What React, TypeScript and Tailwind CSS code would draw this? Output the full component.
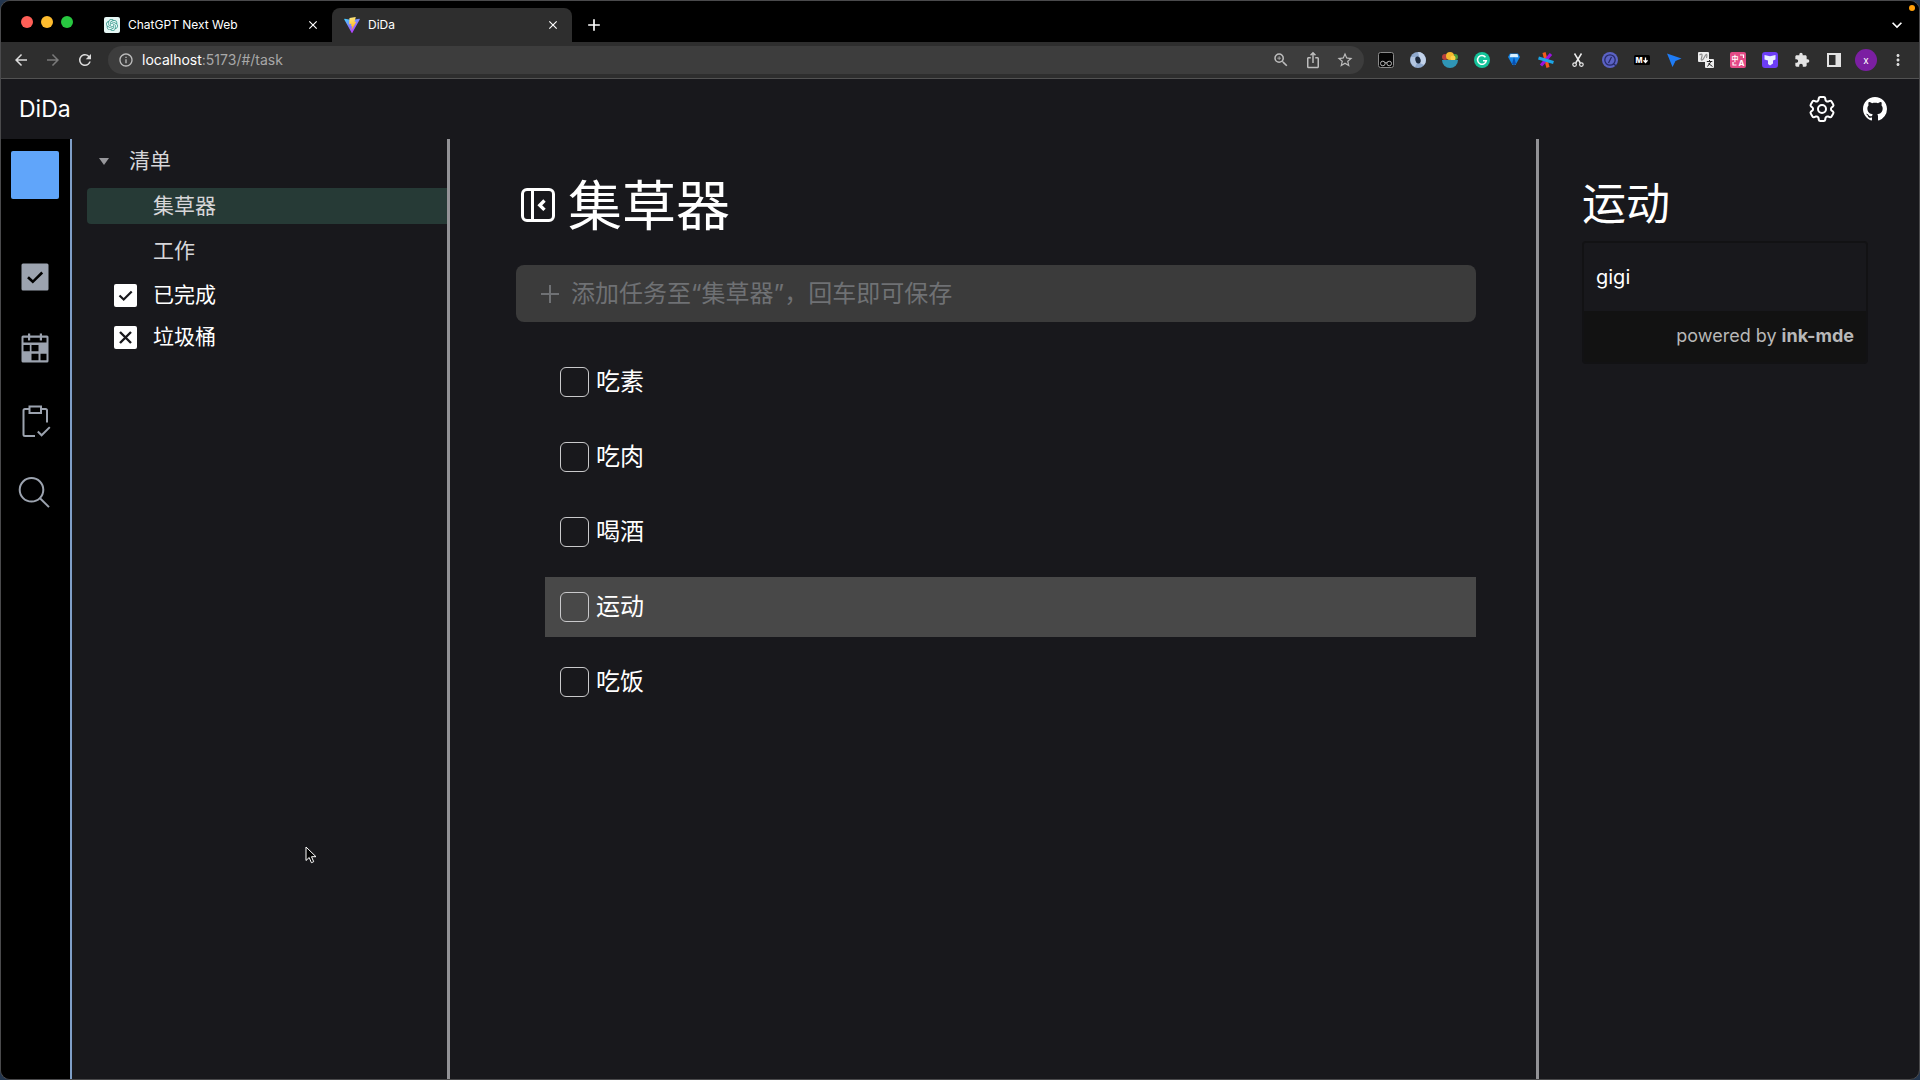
import { useState, type ReactNode } from "react";
import { SiOpenai } from "react-icons/si";
import { HiOutlineCog6Tooth } from "react-icons/hi2";
import { BsGithub } from "react-icons/bs";
import {
  MdArrowBack,
  MdArrowForward,
  MdClose,
  MdExtension,
  MdInfoOutline,
  MdMoreVert,
  MdRefresh,
  MdStarOutline,
  MdZoomIn,
  MdIosShare,
  MdExpandMore,
  MdAdd,
} from "react-icons/md";

const tasks = ["吃素", "吃肉", "喝酒", "运动", "吃饭"];

function ViteLogo() {
  return (
    <svg viewBox="0 0 32 32" className="size-4 shrink-0">
      <defs>
        <linearGradient id="vite-a" x1="0" y1="0" x2="0.6" y2="1">
          <stop offset="0" stopColor="#41d1ff" />
          <stop offset="1" stopColor="#bd34fe" />
        </linearGradient>
        <linearGradient id="vite-b" x1="0.4" y1="0" x2="0.6" y2="1">
          <stop offset="0" stopColor="#ffea83" />
          <stop offset="1" stopColor="#ffa800" />
        </linearGradient>
      </defs>
      <path fill="url(#vite-a)" d="M31.5 5 17 31a1 1 0 0 1-2 0L.5 5c-.4-.8.3-1.6 1-1.4L16 6l14.5-2.4c.8-.2 1.4.6 1 1.4Z" />
      <path fill="url(#vite-b)" d="M23.500 0 11 2.100l-.7 12.300 4-.7c.3 0 .6.2.5.6l-.9 4.2 2-.6c.3 0 .6.3.5.6l-1.500 8.100 9.500-16.400c.1-.3-.1-.6-.4-.6l-2.900.6L23.500 0Z" />
    </svg>
  );
}

function Tab({ icon, title, active }: { icon: ReactNode; title: string; active?: boolean }) {
  return (
    <div
      className={
        active
          ? "flex h-[34px] w-60 items-center gap-2 rounded-t-lg bg-[#2e2e2e] px-3"
          : "flex h-[34px] w-60 items-center gap-2 px-3"
      }
    >
      {icon}
      <a href="#/" className="flex-1 truncate text-xs text-white">
        {title}
      </a>
      <button aria-label="Close tab" className="text-white">
        <MdClose className="size-3.5" />
      </button>
    </div>
  );
}

const extensions: { name: string; art: ReactNode }[] = [
  {
    name: "Goggles",
    art: (
      <>
        <rect x="0.5" y="0.5" width="15" height="15" rx="2" fill="#050505" stroke="#8a8a8a" />
        <g fill="none" stroke="#b5b5b5">
          <circle cx="4.8" cy="11.5" r="2.3" />
          <circle cx="11.2" cy="11.5" r="2.3" />
          <path d="M7 10.8h2" />
        </g>
      </>
    ),
  },
  {
    name: "Ring",
    art: (
      <>
        <circle cx="8" cy="8" r="8" fill="#8fa9cd" />
        <path d="M8 0a8 8 0 0 1 6 13L10 11l-1-7Z" fill="#c3d3ea" />
        <path d="M1 5a8 8 0 0 0 4 10l2-4-2-6Z" fill="#b3c6e0" />
        <ellipse cx="8" cy="8" rx="2.600" ry="3.600" transform="rotate(-15 8 8)" fill="#1d2a3d" />
      </>
    ),
  },
  {
    name: "Bowl",
    art: (
      <>
        <circle cx="3" cy="5" r="3" fill="#b8403c" />
        <circle cx="13" cy="5" r="3" fill="#4b9c3f" />
        <circle cx="8" cy="4" r="4" fill="#f5b82e" />
        <circle cx="11" cy="6" r="2.5" fill="#ffd24a" />
        <path d="M0 8h16a8 8 0 0 1-16 0Z" fill="#2f95b5" />
      </>
    ),
  },
  {
    name: "Grammar",
    art: (
      <>
        <circle cx="8" cy="8" r="8" fill="#15c39a" />
        <path d="M11.500 5.200A4.400 4.400 0 1 0 12.300 8.800H9" fill="none" stroke="#fff" strokeWidth="1.500" />
      </>
    ),
  },
  {
    name: "Gem",
    art: (
      <>
        <path d="M4 1.5h8L14 5 9.5 13h-3L2 5Z" fill="#1484e6" />
        <path d="M4.500 2h7l.8 3.200H3.700Z" fill="#d7f0ff" />
        <path d="M8 5 6 12h4Z" fill="#0a4fb0" />
        <path d="M7 12.5h2V15H7Z" fill="#1e3350" />
      </>
    ),
  },
  {
    name: "Burst",
    art: (
      <g strokeWidth="3.200">
        <path d="M6 0.5 10 15.5" stroke="#f4581c" />
        <path d="M13 2 3 13.500" stroke="#9a12e0" />
        <path d="M0.500 6 15.500 10.500" stroke="#1ba6e8" />
      </g>
    ),
  },
  {
    name: "Scissors",
    art: (
      <g fill="none" stroke="#ececec" strokeWidth="1.500">
        <path d="M4.500 1.500 10.300 11M11.500 1.500 5.700 11" />
        <circle cx="4.600" cy="12.600" r="1.800" strokeWidth="1.200" />
        <circle cx="11.400" cy="12.600" r="1.800" strokeWidth="1.200" />
      </g>
    ),
  },
  {
    name: "Compass",
    art: (
      <>
        <circle cx="8" cy="8" r="8" fill="#5b62c4" />
        <circle cx="8" cy="8" r="5.2" fill="none" stroke="#262a66" strokeWidth="1.3" />
        <path d="m9.500 5-3 6M11.500 12l3 2" stroke="#262a66" strokeWidth="1.3" />
      </>
    ),
  },
  {
    name: "Markdown",
    art: (
      <>
        <rect x="0" y="3" width="16" height="10" rx="1.5" fill="#000" />
        <text x="1.5" y="10.7" fontSize="7.5" fontWeight="800" fill="#fff">M</text>
        <path d="M11.5 5.500v4M9.500 8.300l2 2.200 2-2.200" fill="none" stroke="#fff" strokeWidth="1.3" />
      </>
    ),
  },
  { name: "Pointer", art: <path d="M1 1.5 15.5 6.5 9.5 9 6.5 15Z" fill="#1f7cf5" /> },
  {
    name: "Reader",
    art: (
      <>
        <rect x="0" y="0" width="11" height="10" rx="1" fill="#ededed" />
        <path d="M1.5 3c3-2 3 0 2 3s1 3 3-1 3-3 2 1" fill="none" stroke="#8d8d8d" strokeWidth="1.2" />
        <rect x="7" y="7" width="9" height="9" rx="1" fill="#ededed" />
        <path d="M8.800 9.500h5.500M11.500 8v1.500M9.500 14.500l3.500-5M10.500 11.500l4 3" fill="none" stroke="#222" />
      </>
    ),
  },
  {
    name: "Translate",
    art: (
      <>
        <rect width="16" height="16" rx="2" fill="#e34a86" />
        <text x="1.5" y="8.5" fontSize="7" fontWeight="700" fill="#fff">中</text>
        <text x="8.5" y="14" fontSize="8" fontWeight="700" fill="#fff">A</text>
        <path d="M10 3h3.500v3M6.500 13H3v-3" fill="none" stroke="#fff" strokeWidth="1.2" />
      </>
    ),
  },
  {
    name: "Twin",
    art: (
      <>
        <rect width="16" height="16" rx="3" fill="#6c3df5" />
        <path d="M2.500 3 8 4.200 13.500 3v4.500L11 8.500v3L8 13.500 6 12V8.500L2.500 7.500Z" fill="#e9ecff" />
      </>
    ),
  },
];

function BrowserChrome() {
  return (
    <header>
      <div className="flex h-[41px] items-end bg-black pl-5 pr-3">
        <div className="flex h-[41px] w-[71px] items-center gap-2">
          <span className="size-3 rounded-full bg-[#ff5f57]" />
          <span className="size-3 rounded-full bg-[#febc2e]" />
          <span className="size-3 rounded-full bg-[#28c840]" />
        </div>
        <Tab
          icon={
            <span className="flex size-4 shrink-0 items-center justify-center rounded-xs bg-[#e6f7f5] text-[#3d9c8f]">
              <SiOpenai className="size-3" />
            </span>
          }
          title="ChatGPT Next Web"
        />
        <Tab icon={<ViteLogo />} title="DiDa" active />
        <button aria-label="New tab" className="flex h-[34px] w-11 items-center justify-center text-white">
          <MdAdd className="size-5" />
        </button>
        <button aria-label="Search tabs" className="ml-auto flex h-[34px] items-center text-white">
          <MdExpandMore className="size-5" />
        </button>
      </div>

      <div className="flex h-[37px] items-center border-b border-[#525252] bg-[#2e2e2e] pl-[11px] pr-3">
        <div className="flex w-24 items-center gap-3.5 text-[#dcdcdc]">
          <button aria-label="Back"><MdArrowBack className="size-[18px]" /></button>
          <button aria-label="Forward" className="text-[#7a7a7a]"><MdArrowForward className="size-[18px]" /></button>
          <button aria-label="Reload"><MdRefresh className="size-[18px]" /></button>
        </div>
        <div className="flex h-7 flex-1 items-center rounded-full bg-[#3d3d3d] px-2.5 text-[#bdbdbd]">
          <MdInfoOutline className="size-4" />
          <a href="#/task" className="ml-2 flex-1 text-sm text-[#a8a8a8]">
            <span className="text-white">localhost</span>:5173/#/task
          </a>
          <div className="flex gap-3.5">
            <button aria-label="Zoom"><MdZoomIn className="size-[18px]" /></button>
            <button aria-label="Share"><MdIosShare className="size-[18px]" /></button>
            <button aria-label="Bookmark"><MdStarOutline className="size-[18px]" /></button>
          </div>
        </div>
        <div className="ml-3.5 flex items-center gap-4 text-[#e3e3e3]">
          {extensions.map((ext) => (
            <button key={ext.name} aria-label={ext.name} className="size-4">
              <svg viewBox="0 0 16 16" className="size-4">{ext.art}</svg>
            </button>
          ))}
          <button aria-label="Extensions"><MdExtension className="size-4" /></button>
          <button aria-label="Side panel">
            <svg viewBox="0 0 16 16" className="size-4">
              <path fill="currentColor" fillRule="evenodd" d="M1 1h14v14H1Zm2 2v10h6.500V3Z" />
            </svg>
          </button>
        </div>
        <button className="ml-[13px] size-[22px] rounded-full bg-[#7b1fa2] text-[10px] text-white">x</button>
        <button aria-label="Menu" className="ml-3 text-[#dcdcdc]"><MdMoreVert className="size-[18px]" /></button>
      </div>
    </header>
  );
}

function IconRail() {
  return (
    <nav className="flex w-[71px] shrink-0 flex-col items-center border-r-2 border-[#7f9fc8] bg-black pr-px pt-3 text-[#9ca3af]">
      <button aria-label="Account" className="size-12 rounded-xs bg-[#60a5fa]" />
      <div className="mt-[60px] flex flex-col gap-9">
        <button aria-label="Tasks">
          <svg viewBox="0 0 36 36" className="size-9">
            <rect x="4.5" y="4.5" width="27" height="27" rx="1.5" fill="currentColor" />
            <path d="m11 18.200 4.800 4.600 9.400-9.300" fill="none" stroke="#000" strokeWidth="2.6" />
          </svg>
        </button>
        <button aria-label="Calendar">
          <svg viewBox="0 0 36 36" className="size-9">
            <path fill="currentColor" d="M6 4.500h5v-2h2.200v2h9.600v-2H25v2h5A1.500 1.500 0 0 1 31.500 6v24a1.500 1.500 0 0 1-1.500 1.500H6A1.500 1.500 0 0 1 4.500 30V6A1.500 1.500 0 0 1 6 4.500Z" />
            <path fill="#000" d="M6.500 6.800H11v2.700h2.200V6.800h9.600v2.700H25V6.800h4.500v4.700h-23ZM6.500 14h6.300v6.300H6.500ZM14.500 14h7v6.300h-7ZM14.500 22.700h7v6.600h-7ZM23.500 22.700h6v6.600h-6Z" />
          </svg>
        </button>
        <button aria-label="Habits">
          <svg viewBox="0 0 36 36" className="size-9" fill="none" stroke="currentColor" strokeWidth="2">
            <path d="M12.500 6H8a1.500 1.500 0 0 0-1.500 1.500v24A1.500 1.500 0 0 0 8 33h10M24 6h4.500A1.500 1.500 0 0 1 30 7.500v12" />
            <path d="M12.500 3.500h11.500v6.500h-11.500Z" />
            <path d="m20.800 28.500 3.800 3.800 8.200-8.200" />
          </svg>
        </button>
        <button aria-label="Search">
          <svg viewBox="0 0 36 36" className="size-9" fill="none" stroke="currentColor" strokeWidth="2">
            <circle cx="14.5" cy="14.8" r="11.8" />
            <path d="m23 23.300 9 8.800" />
          </svg>
        </button>
      </div>
    </nav>
  );
}

function Sidebar() {
  return (
    <aside className="w-[378px] shrink-0 border-r-[3px] border-[#929296] pl-[15px] pt-1 text-[21px] text-white">
      <ul className="flex flex-col gap-[9px] text-[#d6d6d9]">
        <li>
          <button className="flex h-9 w-full items-center gap-5 pl-3">
            <svg viewBox="0 0 10 7" className="h-[7px] w-2.5"><path d="M0 0h10L5 7Z" fill="#97979b" /></svg>
            清单
          </button>
        </li>
        <li><button className="h-9 w-full rounded-l-sm bg-[#263a36] pl-[66px] text-left">集草器</button></li>
        <li><button className="h-9 w-full pl-[66px] text-left">工作</button></li>
      </ul>
      <button className="mt-[5px] flex h-[42px] w-full items-center gap-4 pl-[27px]">
        <svg viewBox="0 0 23 23" className="size-[23px]">
          <rect width="23" height="23" rx="2" fill="#fff" />
          <path d="m5.500 11.500 4.200 4 8-8" fill="none" stroke="#18181c" strokeWidth="2.2" />
        </svg>
        已完成
      </button>
      <button className="flex h-[42px] w-full items-center gap-4 pl-[27px]">
        <svg viewBox="0 0 23 23" className="size-[23px]">
          <rect width="23" height="23" rx="2" fill="#fff" />
          <path d="m6 6 11 11M17 6 6 17" stroke="#18181c" strokeWidth="2.4" />
        </svg>
        垃圾桶
      </button>
    </aside>
  );
}

function TaskList({ selected, onSelect }: { selected: string; onSelect: (task: string) => void }) {
  return (
    <main className="min-w-0 flex-1 px-[60px] pl-[66px] pt-8 text-2xl text-white">
      <div className="flex h-[72px] items-start gap-3">
        <button aria-label="Collapse sidebar" className="pl-1 pt-4">
          <svg viewBox="0 0 36 36" className="size-9" fill="none" stroke="currentColor" strokeWidth="3">
            <rect x="2.5" y="2.5" width="31" height="31" rx="4.5" />
            <path d="M12.500 2.500v31" />
            <path d="m24.500 13.500-4.700 4.700 4.700 4.700" strokeWidth="3.4" />
          </svg>
        </button>
        <h1 className="text-[54px] leading-[72px]">集草器</h1>
      </div>

      <div className="mt-[22px] flex h-[57px] items-center rounded-lg bg-[#3b3b3b] pl-6 text-[#6f7174]">
        <svg viewBox="0 0 20 20" className="size-5"><path d="M10 1v18M1 10h18" stroke="currentColor" strokeWidth="2" /></svg>
        <input
          aria-label="添加任务"
          placeholder="添加任务至“集草器”，回车即可保存"
          className="ml-[11px] h-full flex-1 bg-transparent text-white outline-none placeholder:text-[#6f7174]"
        />
      </div>

      <ul className="mt-[30px] flex flex-col gap-[15px] pl-[29px]">
        {tasks.map((task) => (
          <li
            key={task}
            onClick={() => onSelect(task)}
            className={
              task === selected
                ? "flex h-[60px] items-center bg-[#484848] pl-[15px]"
                : "flex h-[60px] items-center pl-[15px]"
            }
          >
            <label className="flex items-center gap-[7px]">
              <input
                type="checkbox"
                className="h-[30px] w-[29px] appearance-none rounded-md border border-[#c9c9cb] checked:bg-blue-400"
              />
              {task}
            </label>
          </li>
        ))}
      </ul>
    </main>
  );
}

function Detail({ title }: { title: string }) {
  return (
    <section className="w-[383px] shrink-0 border-l-[3px] border-[#929296] pl-[43px] pr-[51px] pt-8 text-white">
      <h2 className="text-[44px] leading-[66px]">{title}</h2>
      <div className="mt-1 overflow-hidden rounded-sm border-2 border-[#121214]">
        <textarea
          aria-label="Note"
          rows={1}
          defaultValue="gigi"
          className="block w-full resize-none bg-[#18181c] px-3 py-5 text-xl leading-7 outline-none"
        />
        <p className="bg-[#121212] px-3 pb-3 pt-[11px] text-right text-lg leading-7 text-[#b8b8b8]">
          powered by <a href="#/ink-mde" className="font-bold">ink-mde</a>
        </p>
      </div>
    </section>
  );
}

export default function App() {
  const [selected, setSelected] = useState("运动");

  return (
    <div className="min-h-screen bg-[#23364f] font-[Inter,'Noto_Sans_CJK_SC',sans-serif]">
      <div className="relative flex min-h-screen flex-col overflow-hidden rounded-[10px] border border-[#4a4a4c] bg-[#18181c]">
        <BrowserChrome />
        <span className="absolute right-1 top-1 size-1.5 rounded-full bg-[#ff9f0a]" />

        <div className="flex h-[60px] items-center justify-between pl-[18px] pr-8 text-white">
          <span className="text-[23px]">DiDa</span>
          <div className="flex items-center gap-[25px]">
            <button aria-label="Settings"><HiOutlineCog6Tooth className="size-8" /></button>
            <a href="#/github" aria-label="GitHub"><BsGithub className="size-6" /></a>
          </div>
        </div>

        <div className="flex flex-1">
          <IconRail />
          <Sidebar />
          <TaskList selected={selected} onSelect={setSelected} />
          <Detail title={selected} />
        </div>

        {/* Mouse pointer */}
        <svg viewBox="0 0 12 18" className="pointer-events-none absolute left-[304px] top-[845px] h-[18px] w-3">
          <path d="M1 1v13.500l3.200-3 2.200 5.200 2.300-1-2.200-5H11Z" fill="#000" stroke="#fff" />
        </svg>
      </div>
    </div>
  );
}
